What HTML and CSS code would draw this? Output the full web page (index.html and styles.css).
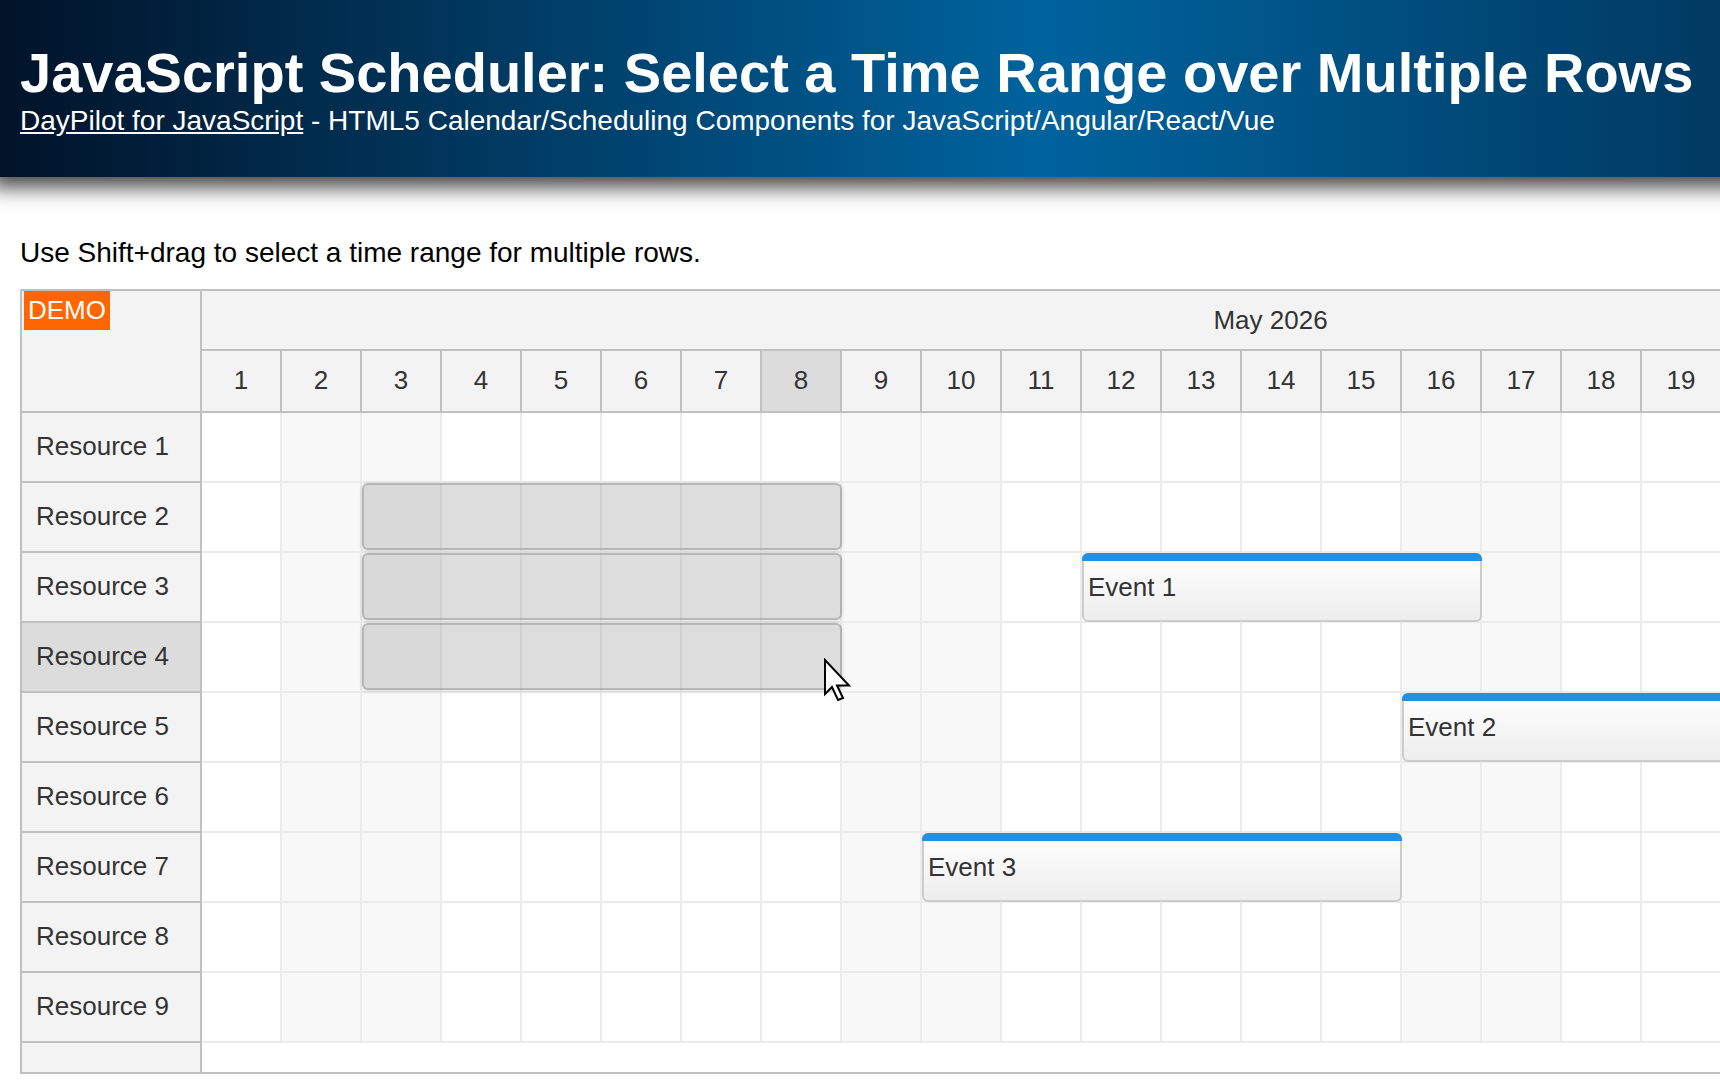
FILE: index.html
```html
<!DOCTYPE html>
<html lang="en">
<head>
<meta charset="utf-8">
<title>JavaScript Scheduler: Select a Time Range over Multiple Rows</title>
<link rel="stylesheet" href="styles.css">
</head>
<body>
<div class="page">
  <header class="header">
    <h1>JavaScript Scheduler: Select a Time Range over Multiple Rows</h1>
    <div class="tagline"><a href="#">DayPilot for JavaScript</a> - HTML5 Calendar/Scheduling Components for JavaScript/Angular/React/Vue</div>
  </header>

  <main class="main">
    <p class="note">Use Shift+drag to select a time range for multiple rows.</p>

    <div class="scheduler">
      <div class="rows">
        <div class="corner"><span class="demo">DEMO</span></div>
        <div class="rowhead">Resource 1</div>
        <div class="rowhead">Resource 2</div>
        <div class="rowhead">Resource 3</div>
        <div class="rowhead active">Resource 4</div>
        <div class="rowhead">Resource 5</div>
        <div class="rowhead">Resource 6</div>
        <div class="rowhead">Resource 7</div>
        <div class="rowhead">Resource 8</div>
        <div class="rowhead">Resource 9</div>
        <div class="rowfill"></div>
      </div>

      <div class="timeline">
        <div class="month">May 2026</div>
        <div class="days">
          <div class="day">1</div><div class="day">2</div><div class="day">3</div><div class="day">4</div>
          <div class="day">5</div><div class="day">6</div><div class="day">7</div><div class="day active">8</div>
          <div class="day">9</div><div class="day">10</div><div class="day">11</div><div class="day">12</div>
          <div class="day">13</div><div class="day">14</div><div class="day">15</div><div class="day">16</div>
          <div class="day">17</div><div class="day">18</div><div class="day">19</div><div class="day">20</div>
          <div class="day">21</div><div class="day">22</div><div class="day">23</div><div class="day">24</div>
          <div class="day">25</div><div class="day">26</div><div class="day">27</div><div class="day">28</div>
          <div class="day">29</div><div class="day">30</div><div class="day">31</div>
        </div>

        <div class="grid">
          <div class="lane"></div>
          <div class="lane"></div>
          <div class="lane"></div>
          <div class="lane"></div>
          <div class="lane"></div>
          <div class="lane"></div>
          <div class="lane"></div>
          <div class="lane"></div>
          <div class="lane"></div>

          <!-- multi-row range selection: May 3 - May 8, Resource 2 - 4 -->
          <div class="selection" style="top:70px;left:160px;width:480px"></div>
          <div class="selection" style="top:140px;left:160px;width:480px"></div>
          <div class="selection" style="top:210px;left:160px;width:480px"></div>

          <div class="event" style="top:140px;left:880px;width:400px">Event 1</div>
          <div class="event" style="top:280px;left:1200px;width:480px">Event 2</div>
          <div class="event" style="top:420px;left:720px;width:480px">Event 3</div>

          <svg class="pointer" width="30" height="44" viewBox="0 0 30 44" aria-hidden="true">
            <path d="M2 2 L2 36 L9 29 L15 42 L20 40 L14 27.5 L26 27.5 Z" fill="#fff" stroke="#000" stroke-width="2" stroke-linejoin="miter"/>
          </svg>
        </div>
        <div class="gridfill"></div>
      </div>
    </div>
  </main>
</div>
</body>
</html>
```

FILE: styles.css
```css
html {
  overflow: hidden;
}

body {
  margin: 0;
  background: #fff;
  color: #000;
  font-family: "Liberation Sans", Arial, sans-serif;
}

.page {
  width: 2361px;
}

/* page header */
.header {
  padding: 41px 20px;
  color: #fff;
  background: linear-gradient(to right, #011329 0%, #00639e 44%, #011329 100%);
  box-shadow: 0 0 20px 10px rgba(0, 0, 0, 0.75);
}

.header h1 {
  margin: 0;
  font-size: 56px;
  line-height: 64px;
  font-weight: bold;
}

.tagline {
  font-size: 28px;
  line-height: 31px;
}

.tagline a {
  color: #fff;
}

.main {
  padding: 60px 20px 0;
}

.note {
  margin: 0 0 20px;
  font-size: 28px;
  line-height: 32px;
}

/* scheduler */
.scheduler {
  display: flex;
  width: 2321px;
  box-sizing: border-box;
  border: 2px solid #c0c0c0;
  color: #333;
  font-size: 26px;
}

.rows {
  flex: none;
  width: 180px;
  box-sizing: border-box;
  border-right: 2px solid #c0c0c0;
  background: #f3f3f3;
}

.corner {
  height: 122px;
  box-sizing: border-box;
  border-bottom: 2px solid #c0c0c0;
  padding-left: 2px;
}

.demo {
  display: inline-block;
  padding: 4px;
  background: #ff6600;
  color: #fff;
  line-height: 31px;
}

.rowhead {
  display: flex;
  align-items: center;
  height: 70px;
  box-sizing: border-box;
  padding-left: 14px;
  padding-bottom: 1px;
  border-bottom: 2px solid #c0c0c0;
}

.rowhead.active {
  background: #dcdcdc;
}

.rowfill,
.gridfill {
  height: 29px;
}

.timeline {
  flex: 1;
  min-width: 0;
  overflow: hidden;
}

.month {
  display: flex;
  align-items: center;
  justify-content: center;
  height: 60px;
  box-sizing: border-box;
  border-bottom: 2px solid #c0c0c0;
  background: #f3f3f3;
}

.days {
  display: flex;
  width: 2480px;
  background: #f3f3f3;
}

.day {
  flex: none;
  display: flex;
  align-items: center;
  justify-content: center;
  width: 80px;
  height: 62px;
  box-sizing: border-box;
  padding-bottom: 1px;
  border-right: 2px solid #c0c0c0;
  border-bottom: 2px solid #c0c0c0;
}

.day.active {
  background: #dcdcdc;
}

.grid {
  position: relative;
  width: 2480px;
}

/* one lane per resource: day cell lines + weekend shading (May 1 is a Friday) */
.lane {
  height: 70px;
  box-sizing: border-box;
  border-bottom: 2px solid #ebebeb;
  background:
    repeating-linear-gradient(to right, transparent 0 78px, #ebebeb 78px 80px),
    repeating-linear-gradient(to right, #fff 0 80px, #f8f8f8 80px 240px, #fff 240px 560px);
}

.selection {
  position: absolute;
  height: 67px;
  box-sizing: border-box;
  border: 2px solid rgba(140, 140, 140, 0.45);
  border-radius: 6px;
  background: rgba(170, 170, 170, 0.4);
  box-shadow: 0 1px 4px rgba(0, 0, 0, 0.15);
}

.event {
  position: absolute;
  display: flex;
  align-items: center;
  height: 69px;
  box-sizing: border-box;
  padding-left: 4px;
  padding-bottom: 1px;
  border: 2px solid #cccccc;
  border-radius: 6px;
  background: linear-gradient(#ffffff, #ededed);
  color: #333;
  line-height: 30px;
  white-space: nowrap;
}

.event::before {
  content: "";
  position: absolute;
  top: -2px;
  left: -2px;
  right: -2px;
  height: 8px;
  border-radius: 6px 6px 0 0;
  background: #2490e0;
}

.pointer {
  position: absolute;
  left: 621px;
  top: 245px;
}
```
